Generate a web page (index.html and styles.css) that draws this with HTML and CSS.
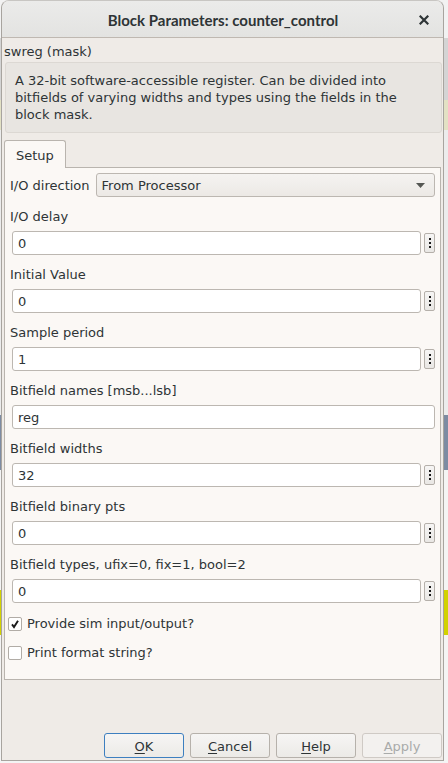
FILE: index.html
```html
<!DOCTYPE html>
<html>
<head>
<meta charset="utf-8">
<link rel="stylesheet" href="styles.css">
</head>
<body>
<div class="window">
  <header class="titlebar">
    <span></span>
    <span class="title">Block Parameters: counter_control</span>
    <span class="close"><svg width="10" height="10" viewBox="0 0 10 10"><path d="M1.5 1.5 L8.5 8.5 M8.5 1.5 L1.5 8.5" stroke="#2e3436" stroke-width="2.2" stroke-linecap="square"/></svg></span>
  </header>
  <div class="mask-name">swreg (mask)</div>
  <div class="desc">A 32-bit software-accessible register. Can be divided into bitfields of varying widths and types using the fields in the block mask.</div>
  <div class="tabs"><div class="tab">Setup</div></div>
  <div class="panel">
    <div class="inline-row">
      <span class="inline-label">I/O direction</span>
      <div class="select">
        <span>From Processor</span>
        <svg class="arrow" width="9" height="5" viewBox="0 0 9 5"><path d="M0 0 H9 L4.5 5 Z" fill="#555753"/></svg>
      </div>
    </div>

    <div class="field">
      <div class="label">I/O delay</div>
      <div class="input-row"><div class="input">0</div><div class="more"><i></i><i></i><i></i></div></div>
    </div>
    <div class="field">
      <div class="label">Initial Value</div>
      <div class="input-row"><div class="input">0</div><div class="more"><i></i><i></i><i></i></div></div>
    </div>
    <div class="field">
      <div class="label">Sample period</div>
      <div class="input-row"><div class="input">1</div><div class="more"><i></i><i></i><i></i></div></div>
    </div>
    <div class="field">
      <div class="label">Bitfield names [msb...lsb]</div>
      <div class="input-row"><div class="input">reg</div></div>
    </div>
    <div class="field">
      <div class="label">Bitfield widths</div>
      <div class="input-row"><div class="input">32</div><div class="more"><i></i><i></i><i></i></div></div>
    </div>
    <div class="field">
      <div class="label">Bitfield binary pts</div>
      <div class="input-row"><div class="input">0</div><div class="more"><i></i><i></i><i></i></div></div>
    </div>
    <div class="field">
      <div class="label">Bitfield types, ufix=0, fix=1, bool=2</div>
      <div class="input-row"><div class="input">0</div><div class="more"><i></i><i></i><i></i></div></div>
    </div>

    <div class="checks">
      <div class="check"><span class="box"><svg width="10" height="10" viewBox="0 0 10 10"><path d="M2 5.4 L4 8 L8 1.8" fill="none" stroke="#1a1a1a" stroke-width="1.9"/></svg></span><span>Provide sim input/output?</span></div>
      <div class="check"><span class="box"></span><span>Print format string?</span></div>
    </div>
  </div>
  <div class="buttons">
    <div class="btn default"><u>O</u>K</div>
    <div class="btn"><u>C</u>ancel</div>
    <div class="btn"><u>H</u>elp</div>
    <div class="btn disabled"><u>A</u>pply</div>
  </div>
</div>
</body>
</html>
```

FILE: styles.css
```css
* { box-sizing: border-box; }

html, body {
  margin: 0;
  padding: 0;
}

body {
  width: 448px;
  height: 763px;
  overflow: hidden;
  font-family: "DejaVu Sans", sans-serif;
  font-size: 13px;
  color: #2e3436;
  background: linear-gradient(to bottom,
    #f2f2f2 0, #f2f2f2 38px,
    #d4d4d4 38px, #d4d4d4 100px,
    #e3e1c4 100px, #e3e1c4 130px,
    #ececec 130px, #ececec 415px,
    #7d8ba2 415px, #7d8ba2 470px,
    #f4f4f4 470px, #f4f4f4 590px,
    #d2d200 590px, #d2d200 635px,
    #f4f4f4 635px);
}

.window {
  margin-left: 1px;
  width: 443px;
  height: 761px;
  background: #efebe7;
  border: 1px solid #a8a49f;
  border-top-color: #c8c6c3;
  border-radius: 8px 8px 0 0;
  display: flex;
  flex-direction: column;
}

.titlebar {
  height: 37px;
  flex: none;
  display: grid;
  grid-template-columns: 1fr auto 1fr;
  align-items: center;
  padding-top: 2px;
  background: linear-gradient(to bottom, #ebebea, #e3e3e1);
  border-bottom: 1px solid #bfb8b1;
  border-radius: 7px 7px 0 0;
}

.title {
  font-family: Lato, "DejaVu Sans", sans-serif;
  font-weight: bold;
  font-size: 15px;
  color: #2e3436;
  padding-left: 1px;
}

.close {
  justify-self: end;
  display: flex;
  padding-right: 14px;
}

.mask-name {
  padding: 5px 0 0 2px;
  line-height: 18px;
  height: 23px;
  flex: none;
}

.desc {
  margin: 1px 1px 0 3px;
  padding: 9px 10px 9px 9px;
  line-height: 17px;
  background: #e8e5e1;
  border: 1px solid #dcd8d3;
  border-radius: 3px;
  flex: none;
  height: 71px;
}

.tabs {
  margin: 7px 0 0 2px;
  display: flex;
  position: relative;
  z-index: 1;
  flex: none;
}

.tab {
  padding: 6px 11px 4px 11px;
  line-height: 17px;
  background: #fbf8f5;
  border: 1px solid #b9b4ae;
  border-bottom: none;
  border-radius: 3px 3px 0 0;
  width: 62px;
  height: 28px;
  margin-bottom: -1px;
}

.panel {
  margin: 0 2px 0 2px;
  height: 513px;
  flex: none;
  background: #fbf8f5;
  border: 1px solid #b9b4ae;
  padding: 5px 5px 0 5px;
}

.inline-row {
  display: flex;
  align-items: center;
  gap: 6px;
  height: 24px;
}

.select {
  flex: 1;
  height: 24px;
  display: flex;
  align-items: center;
  justify-content: space-between;
  padding: 0 9px 0 5px;
  border: 1px solid #bcb7b1;
  border-radius: 3px;
  background: linear-gradient(to bottom, #f5f3f1, #ece9e5);
}

.field .label {
  padding-top: 10px;
  line-height: 20px;
}

.input-row {
  margin-top: 4px;
  margin-left: 2px;
  display: flex;
  align-items: center;
  gap: 3px;
  height: 24px;
}

.input {
  flex: 1;
  height: 24px;
  line-height: 23px;
  padding-left: 5px;
  background: #ffffff;
  border: 1px solid #bcb7b1;
  border-radius: 3px;
}

.more {
  width: 11px;
  height: 20px;
  border: 1px solid #b5b0aa;
  border-radius: 2px;
  background: linear-gradient(to bottom, #f6f5f4, #e9e7e4);
  display: flex;
  flex-direction: column;
  align-items: center;
  justify-content: center;
  gap: 2px;
}

.more i {
  display: block;
  width: 2px;
  height: 2px;
  background: #1a1a1a;
}

.checks {
  margin: 6px 0 0 -2px;
}

.check {
  height: 29px;
  display: flex;
  align-items: center;
  gap: 5px;
}

.box {
  width: 14px;
  height: 14px;
  border: 1px solid #b1aca6;
  border-radius: 2px;
  background: #ffffff;
  display: flex;
  align-items: center;
  justify-content: center;
}

.buttons {
  margin-top: auto;
  padding: 0 1px 2px 0;
  display: flex;
  justify-content: flex-end;
  gap: 6px;
}

.btn {
  width: 80px;
  height: 25px;
  display: flex;
  align-items: center;
  justify-content: center;
  padding-top: 1px;
  border: 1px solid #b6b1ab;
  border-radius: 3px;
  background: linear-gradient(to bottom, #f6f5f4, #eceae7);
  color: #2e3436;
}

.btn u {
  text-decoration-thickness: 1px;
  text-underline-offset: 2px;
}

.btn.default {
  border-color: #3d7fc0;
}

.btn.disabled {
  color: #a9abaa;
  background: #f3f1ef;
  border-color: #cfcac5;
}
```
